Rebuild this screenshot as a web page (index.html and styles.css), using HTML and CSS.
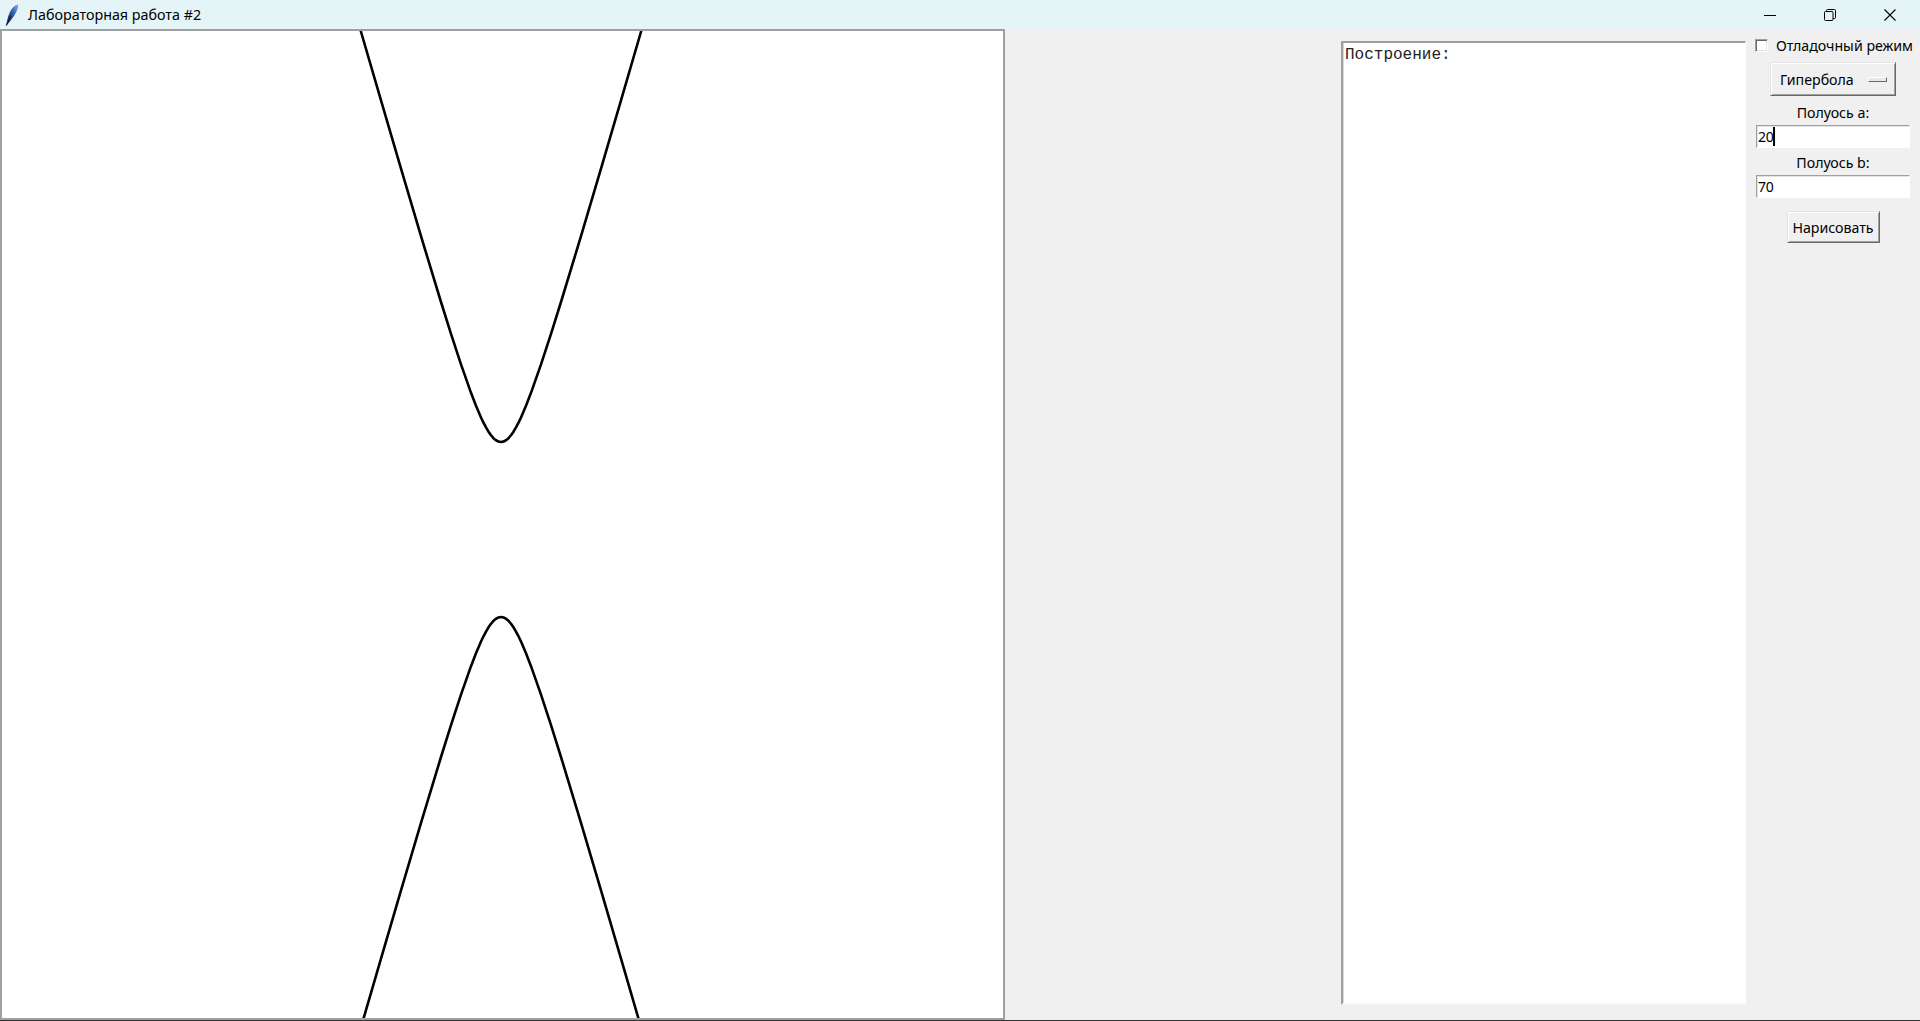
FILE: index.html
```html
<!DOCTYPE html>
<html lang="ru">
<head>
<meta charset="utf-8">
<title>Лабораторная работа #2</title>
<link rel="stylesheet" href="styles.css">
</head>
<body>
<div class="window">
  <div class="titlebar">
    <div class="app-icon">
      <svg width="14" height="22" viewBox="0 0 14 22">
        <defs>
          <linearGradient id="fg" x1="0" y1="1" x2="1" y2="0">
            <stop offset="0" stop-color="#16244a"/>
            <stop offset="0.55" stop-color="#2f5ea6"/>
            <stop offset="1" stop-color="#86acdf"/>
          </linearGradient>
        </defs>
        <path d="M1.5 21 C2 15.5 3.5 9 7 4.5 C9 2 11.5 0.6 13.2 0.8 C13.5 3 12.3 6.3 10.3 9.8 C8.2 13.5 5.6 17 2.8 20 Z" fill="url(#fg)"/>
        <path d="M1.2 21.6 L6.2 11.5" stroke="#111a33" stroke-width="1.2" fill="none"/>
      </svg>
    </div>
    <div class="title">Лабораторная работа #2</div>
    <div class="controls">
      <div class="ctl">
        <svg width="12" height="12" viewBox="0 0 12 12"><path d="M0 6.5 H12" stroke="#000" stroke-width="1"/></svg>
      </div>
      <div class="ctl">
        <svg width="12" height="12" viewBox="0 0 12 12" fill="none" stroke="#000" stroke-width="1"><rect x="0.5" y="2.5" width="8.5" height="9" rx="1"/><path d="M2.5 2.5 V1.5 Q2.5 0.5 3.5 0.5 H10.5 Q11.5 0.5 11.5 1.5 V8.5 Q11.5 9.5 10.5 9.5 H9"/></svg>
      </div>
      <div class="ctl">
        <svg width="12" height="12" viewBox="0 0 12 12"><path d="M0.5 0.5 L11.5 11.5 M11.5 0.5 L0.5 11.5" stroke="#000" stroke-width="1.1"/></svg>
      </div>
    </div>
  </div>
  <div class="client">
    <div class="canvas">
      <svg class="plot" width="1001" height="987" viewBox="0 0 1001 987">
        <g transform="translate(499 498.5)" fill="none" stroke="#000" stroke-width="2.6" stroke-linejoin="round" stroke-linecap="round">
          <polyline points="-145,-515 -140,-497.75 -120,-429.02 -100,-360.77 -80,-293.35 -60,-227.5 -50,-195.66 -40,-165.09 -30,-136.68 -25,-123.74 -20,-112.05 -17.5,-106.81 -15,-102.04 -12.5,-97.83 -10,-94.24 -7.5,-91.35 -5,-89.23 -2.5,-87.94 0,-87.5 2.5,-87.94 5,-89.23 7.5,-91.35 10,-94.24 12.5,-97.83 15,-102.04 17.5,-106.81 20,-112.05 25,-123.74 30,-136.68 40,-165.09 50,-195.66 60,-227.5 80,-293.35 100,-360.77 120,-429.02 140,-497.75 145,-515"/>
          <polyline transform="scale(1 -1)" points="-145,-515 -140,-497.75 -120,-429.02 -100,-360.77 -80,-293.35 -60,-227.5 -50,-195.66 -40,-165.09 -30,-136.68 -25,-123.74 -20,-112.05 -17.5,-106.81 -15,-102.04 -12.5,-97.83 -10,-94.24 -7.5,-91.35 -5,-89.23 -2.5,-87.94 0,-87.5 2.5,-87.94 5,-89.23 7.5,-91.35 10,-94.24 12.5,-97.83 15,-102.04 17.5,-106.81 20,-112.05 25,-123.74 30,-136.68 40,-165.09 50,-195.66 60,-227.5 80,-293.35 100,-360.77 120,-429.02 140,-497.75 145,-515"/>
        </g>
      </svg>
    </div>
    <div class="log">Построение:</div>
    <div class="panel">
      <label class="check-row"><span class="checkbox"></span><span>Отладочный режим</span></label>
      <div class="menubutton"><span>Гипербола</span><span class="indicator"></span></div>
      <div class="label">Полуось a:</div>
      <div class="entry">20<span class="caret"></span></div>
      <div class="label">Полуось b:</div>
      <div class="entry">70</div>
      <div class="button">Нарисовать</div>
    </div>
  </div>
</div>
</body>
</html>
```

FILE: styles.css
```css
html, body {
  margin: 0;
  padding: 0;
}
body {
  background: #f0f0f0;
  font-family: "Noto Sans", "Open Sans", sans-serif;
  font-size: 14.2px;
  color: #000;
  overflow: hidden;
}
.window {
  width: 1920px;
  height: 1021px;
  display: flex;
  flex-direction: column;
}
.titlebar {
  height: 29px;
  flex: 0 0 29px;
  background: #e5f5f7;
  display: flex;
  align-items: center;
}
.app-icon {
  width: 14px;
  height: 22px;
  margin-left: 5px;
  margin-top: 1px;
}
.title {
  margin-left: 9px;
  font-size: 14.3px;
  line-height: 29px;
}
.controls {
  margin-left: auto;
  display: flex;
  height: 29px;
}
.ctl {
  width: 60px;
  height: 29px;
  display: flex;
  align-items: center;
  justify-content: center;
}
.ctl svg {
  display: block;
}
.client {
  flex: 1;
  display: flex;
  border-bottom: 1px solid #2e3234;
}
.canvas {
  width: 1001px;
  height: 987px;
  border: 2px solid #a0a0a0;
  background: #fff;
  overflow: hidden;
  flex: 0 0 auto;
}
.plot {
  display: block;
}
.log {
  margin-left: auto;
  margin-top: 12px;
  width: 405px;
  height: 964px;
  box-sizing: border-box;
  background: #fff;
  border-style: solid;
  border-width: 2px 1px 2px 2px;
  border-color: #a0a0a0 #ffffff #f7f7f7 #a0a0a0;
  box-shadow: inset 1px 0 0 #d6d6d6;
  font-family: "Liberation Mono", "DejaVu Sans Mono", monospace;
  font-size: 16px;
  line-height: 19px;
  padding: 3px 0 0 2px;
  color: #222;
}
.panel {
  width: 174px;
  flex: 0 0 174px;
  display: flex;
  flex-direction: column;
  align-items: center;
}
.check-row {
  margin-top: 7px;
  height: 19px;
  display: flex;
  align-items: center;
  gap: 8px;
  white-space: nowrap;
  padding-left: 2px;
}
.checkbox {
  width: 13px;
  height: 13px;
  box-sizing: border-box;
  background: #fff;
  border: 1px solid;
  border-color: #a0a0a0 #ffffff #ffffff #a0a0a0;
  box-shadow: inset 1px 1px 0 #696969, inset -1px -1px 0 #e3e3e3;
}
.menubutton {
  margin-top: 7px;
  width: 126px;
  height: 34px;
  box-sizing: border-box;
  border: 1px solid;
  border-color: #e3e3e3 #696969 #696969 #e3e3e3;
  box-shadow: inset 1px 1px 0 #fff, inset -1px -1px 0 #a0a0a0;
  display: flex;
  align-items: center;
  padding: 0 8px 0 9px;
  justify-content: space-between;
}
.indicator {
  width: 19px;
  height: 5px;
  box-sizing: border-box;
  border: 1px solid;
  border-color: #ffffff #696969 #696969 #ffffff;
  background: #e8e8e8;
  margin-top: 1px;
}
.label {
  margin-top: 7px;
  height: 19px;
  line-height: 19px;
}
.label + .entry {
  margin-top: 3px;
}
.entry + .label {
  margin-top: 5px;
}
.entry {
  width: 154px;
  height: 23px;
  box-sizing: border-box;
  background: #fff;
  border: 1px solid;
  border-color: #a0a0a0 #ffffff #ffffff #a0a0a0;
  box-shadow: inset 1px 1px 0 #e3e3e3;
  padding-left: 1px;
  line-height: 21px;
  font-size: 14px;
  display: flex;
  align-items: center;
  letter-spacing: -0.3px;
}
.caret {
  width: 2px;
  height: 19px;
  background: #000;
}
.button {
  margin-top: 13px;
  width: 93px;
  height: 32px;
  box-sizing: border-box;
  border: 1px solid;
  border-color: #e3e3e3 #696969 #696969 #e3e3e3;
  box-shadow: inset 1px 1px 0 #fff, inset -1px -1px 0 #a0a0a0;
  display: flex;
  align-items: center;
  justify-content: center;
  white-space: nowrap;
}
```
